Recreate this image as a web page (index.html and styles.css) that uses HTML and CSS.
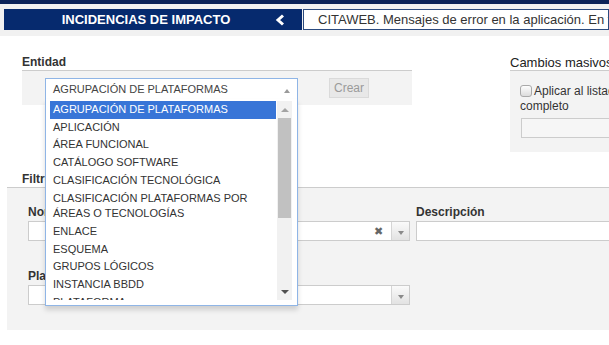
FILE: index.html
```html
<!DOCTYPE html>
<html lang="es">
<head>
  <meta charset="UTF-8">
  <title>Incidencias de impacto</title>
  <link rel="stylesheet" href="styles.css">
</head>
<body>
  <div class="topline"></div>
  <header class="titlebar">
    <div class="module">
      <span class="module-name">INCIDENCIAS DE IMPACTO</span>
      <svg class="back" width="10" height="12" viewBox="0 0 10 12"><polyline points="8,1.5 3,6 8,10.5" fill="none" stroke="#fff" stroke-width="3"/></svg>
    </div>
    <div class="crumb">CITAWEB. Mensajes de error en la aplicación. En fase de análisis</div>
  </header>

  <div class="top-row">
    <section class="entity">
      <h3 class="sec-title">Entidad</h3>
      <div class="entity-panel">
        <div class="chosen">
          <span>AGRUPACIÓN DE PLATAFORMAS</span>
          <span class="caret-up"></span>

          <!-- lista desplegada -->
          <div class="chosen-drop">
            <ul class="options">
              <li class="selected">AGRUPACIÓN DE PLATAFORMAS</li>
              <li>APLICACIÓN</li>
              <li>ÁREA FUNCIONAL</li>
              <li>CATÁLOGO SOFTWARE</li>
              <li>CLASIFICACIÓN TECNOLÓGICA</li>
              <li>CLASIFICACIÓN PLATAFORMAS POR ÁREAS O TECNOLOGÍAS</li>
              <li>ENLACE</li>
              <li>ESQUEMA</li>
              <li>GRUPOS LÓGICOS</li>
              <li>INSTANCIA BBDD</li>
              <li>PLATAFORMA</li>
              <li>SERVIDOR</li>
            </ul>
            <div class="scrollbar">
              <div class="sb-btn"><span class="tri-up"></span></div>
              <div class="sb-thumb"></div>
              <div class="sb-track"></div>
              <div class="sb-btn"><span class="tri-down"></span></div>
            </div>
          </div>
        </div>
        <button class="btn" disabled>Crear</button>
      </div>
    </section>

    <section class="bulk">
      <h3 class="sec-title light">Cambios masivos</h3>
      <div class="bulk-panel">
        <label class="check"><input type="checkbox">Aplicar al listado completo</label>
        <input class="bulk-input" type="text" disabled>
      </div>
    </section>
  </div>

  <section class="filters">
    <h3 class="filters-title">Filtros</h3>
    <div class="filters-panel">
      <div class="field">
        <label>Nombre</label>
        <div class="combo">
          <span class="combo-value"></span>
          <span class="clear">&#10006;</span>
          <span class="combo-btn"><span class="tri-down small"></span></span>
        </div>
      </div>
      <div class="field">
        <label>Descripción</label>
        <input class="text-input" type="text">
      </div>
      <div class="field">
        <label>Plataforma</label>
        <div class="combo">
          <span class="combo-value"></span>
          <span class="combo-btn"><span class="tri-down small"></span></span>
        </div>
      </div>
    </div>
  </section>
</body>
</html>
```

FILE: styles.css
```css
* {
  box-sizing: border-box;
}

html,
body {
  overflow: hidden;
}

body {
  margin: 0;
  font-family: "Liberation Sans", Arial, sans-serif;
  color: #333;
  background: #fff;
}

/* cabecera */
.topline {
  height: 4px;
  background: #0b2359;
}

.titlebar {
  display: flex;
  gap: 1px;
  padding: 5px 0 6px 4px;
  background: #f1f1f1;
}

.module {
  width: 298px;
  height: 21px;
  display: flex;
  align-items: center;
  background: #062a6e;
  color: #fff;
}

.module-name {
  flex: 1;
  margin-right: -13px;
  text-align: center;
  font-size: 13px;
  font-weight: bold;
}

.back {
  margin-right: 17px;
}

.crumb {
  flex: 1;
  height: 21px;
  padding-left: 14px;
  border: 1px solid #2b4a7e;
  background: #fff;
  font-size: 13px;
  line-height: 19px;
  color: #333;
  white-space: nowrap;
  overflow: hidden;
}

/* fila superior */
.top-row {
  display: flex;
  gap: 98px;
  margin-top: 19px;
  padding-left: 22px;
}

.sec-title {
  margin: 0;
  font-size: 12px;
  font-weight: bold;
  line-height: 15px;
  border-bottom: 1px solid #ccc;
  color: #333;
}

.sec-title.light {
  font-size: 13px;
  font-weight: normal;
  color: #222;
  white-space: nowrap;
}

.entity {
  width: 390px;
  flex-shrink: 0;
}

.entity-panel {
  height: 34px;
  display: flex;
  align-items: flex-start;
  gap: 31px;
  padding: 7px 0 0 23px;
  background: #f3f3f3;
}

.chosen {
  position: relative;
  width: 253px;
  height: 21px;
  display: flex;
  align-items: center;
  justify-content: space-between;
  padding: 0 7px 0 7px;
  border: 1px solid #8fb5e6;
  border-bottom: none;
  background: #fff;
  font-size: 11px;
  color: #444;
  line-height: 19px;
}

.caret-up {
  margin-top: 4px;
  border-left: 3px solid transparent;
  border-right: 3px solid transparent;
  border-bottom: 4px solid #9a9a9a;
}

.chosen-drop {
  position: absolute;
  left: -1px;
  top: 20px;
  z-index: 10;
  width: 253px;
  height: 207px;
  display: flex;
  padding: 2px 5px 5px 4px;
  border: 1px solid #8fb5e6;
  border-top: none;
  background: #fff;
  box-shadow: 0 4px 5px rgba(0, 0, 0, 0.15);
}

.options {
  flex: 1;
  margin: 0;
  padding: 0;
  list-style: none;
  overflow: hidden;
  font-size: 11px;
  line-height: 15.7px;
  color: #333;
}

.options li {
  padding: 1px 4px 1px 3px;
}

.options li.selected {
  background: #3875d7;
  color: #fff;
}

.scrollbar {
  width: 15px;
  margin-left: 1px;
  display: flex;
  flex-direction: column;
  background: #f1f1f1;
}

.sb-btn {
  height: 17px;
  display: flex;
  align-items: center;
  justify-content: center;
}

.sb-thumb {
  height: 100px;
  margin: 0 1px;
  background: #c1c1c1;
}

.sb-track {
  flex: 1;
}

.tri-up {
  border-left: 4px solid transparent;
  border-right: 4px solid transparent;
  border-bottom: 4px solid #a3a3a3;
}

.tri-down {
  border-left: 4px solid transparent;
  border-right: 4px solid transparent;
  border-top: 4px solid #505050;
}

.tri-down.small {
  border-left-width: 3px;
  border-right-width: 3px;
  border-top: 4px solid #8a8a8a;
}

.btn {
  width: 40px;
  height: 20px;
  padding: 0;
  border: 1px solid #dadada;
  background: #e8e8e8;
  color: #9a9a9a;
  font-family: inherit;
  font-size: 12px;
}

/* cambios masivos */
.bulk {
  width: 200px;
  flex-shrink: 0;
}

.bulk-panel {
  height: 81px;
  padding: 13px 0 0 10px;
  background: #f3f3f3;
}

.check {
  display: block;
  width: 130px;
  font-size: 12px;
  line-height: 15px;
  color: #333;
}

.check input {
  appearance: none;
  width: 12px;
  height: 12px;
  margin: 0 2px 0 0;
  vertical-align: -2px;
  border: 1px solid #a9a9a9;
  border-radius: 3px;
  background: linear-gradient(#fdfdfd, #dcdcdc);
}

.bulk-input {
  display: block;
  width: 190px;
  height: 20px;
  margin: 4px 0 0 1px;
  border: 1px solid #ccc;
  background: #f6f6f6;
}

/* filtros */
.filters {
  margin: 20px 0 0 7px;
}

.filters-title {
  margin: 0;
  padding-left: 15px;
  font-size: 12px;
  font-weight: bold;
  line-height: 15px;
}

.filters-panel {
  display: grid;
  grid-template-columns: 382px 300px;
  column-gap: 6px;
  row-gap: 28px;
  padding: 17px 0 25px 21px;
  border-top: 1px solid #ccc;
  background: #f3f3f3;
}

.field label {
  display: block;
  margin-bottom: 1px;
  font-size: 12px;
  font-weight: bold;
  line-height: 15px;
  color: #333;
}

.combo {
  height: 20px;
  display: flex;
  align-items: center;
  border: 1px solid #ccc;
  background: #fff;
}

.combo-value {
  flex: 1;
}

.clear {
  margin-right: 8px;
  font-size: 11px;
  color: #666;
}

.combo-btn {
  width: 18px;
  height: 18px;
  display: flex;
  align-items: center;
  justify-content: center;
  padding-top: 4px;
  border-left: 1px solid #d5d5d5;
  background: linear-gradient(#fafafa, #e2e2e2);
}

.text-input {
  display: block;
  width: 100%;
  height: 20px;
  border: 1px solid #ccc;
  background: #fff;
}
```
